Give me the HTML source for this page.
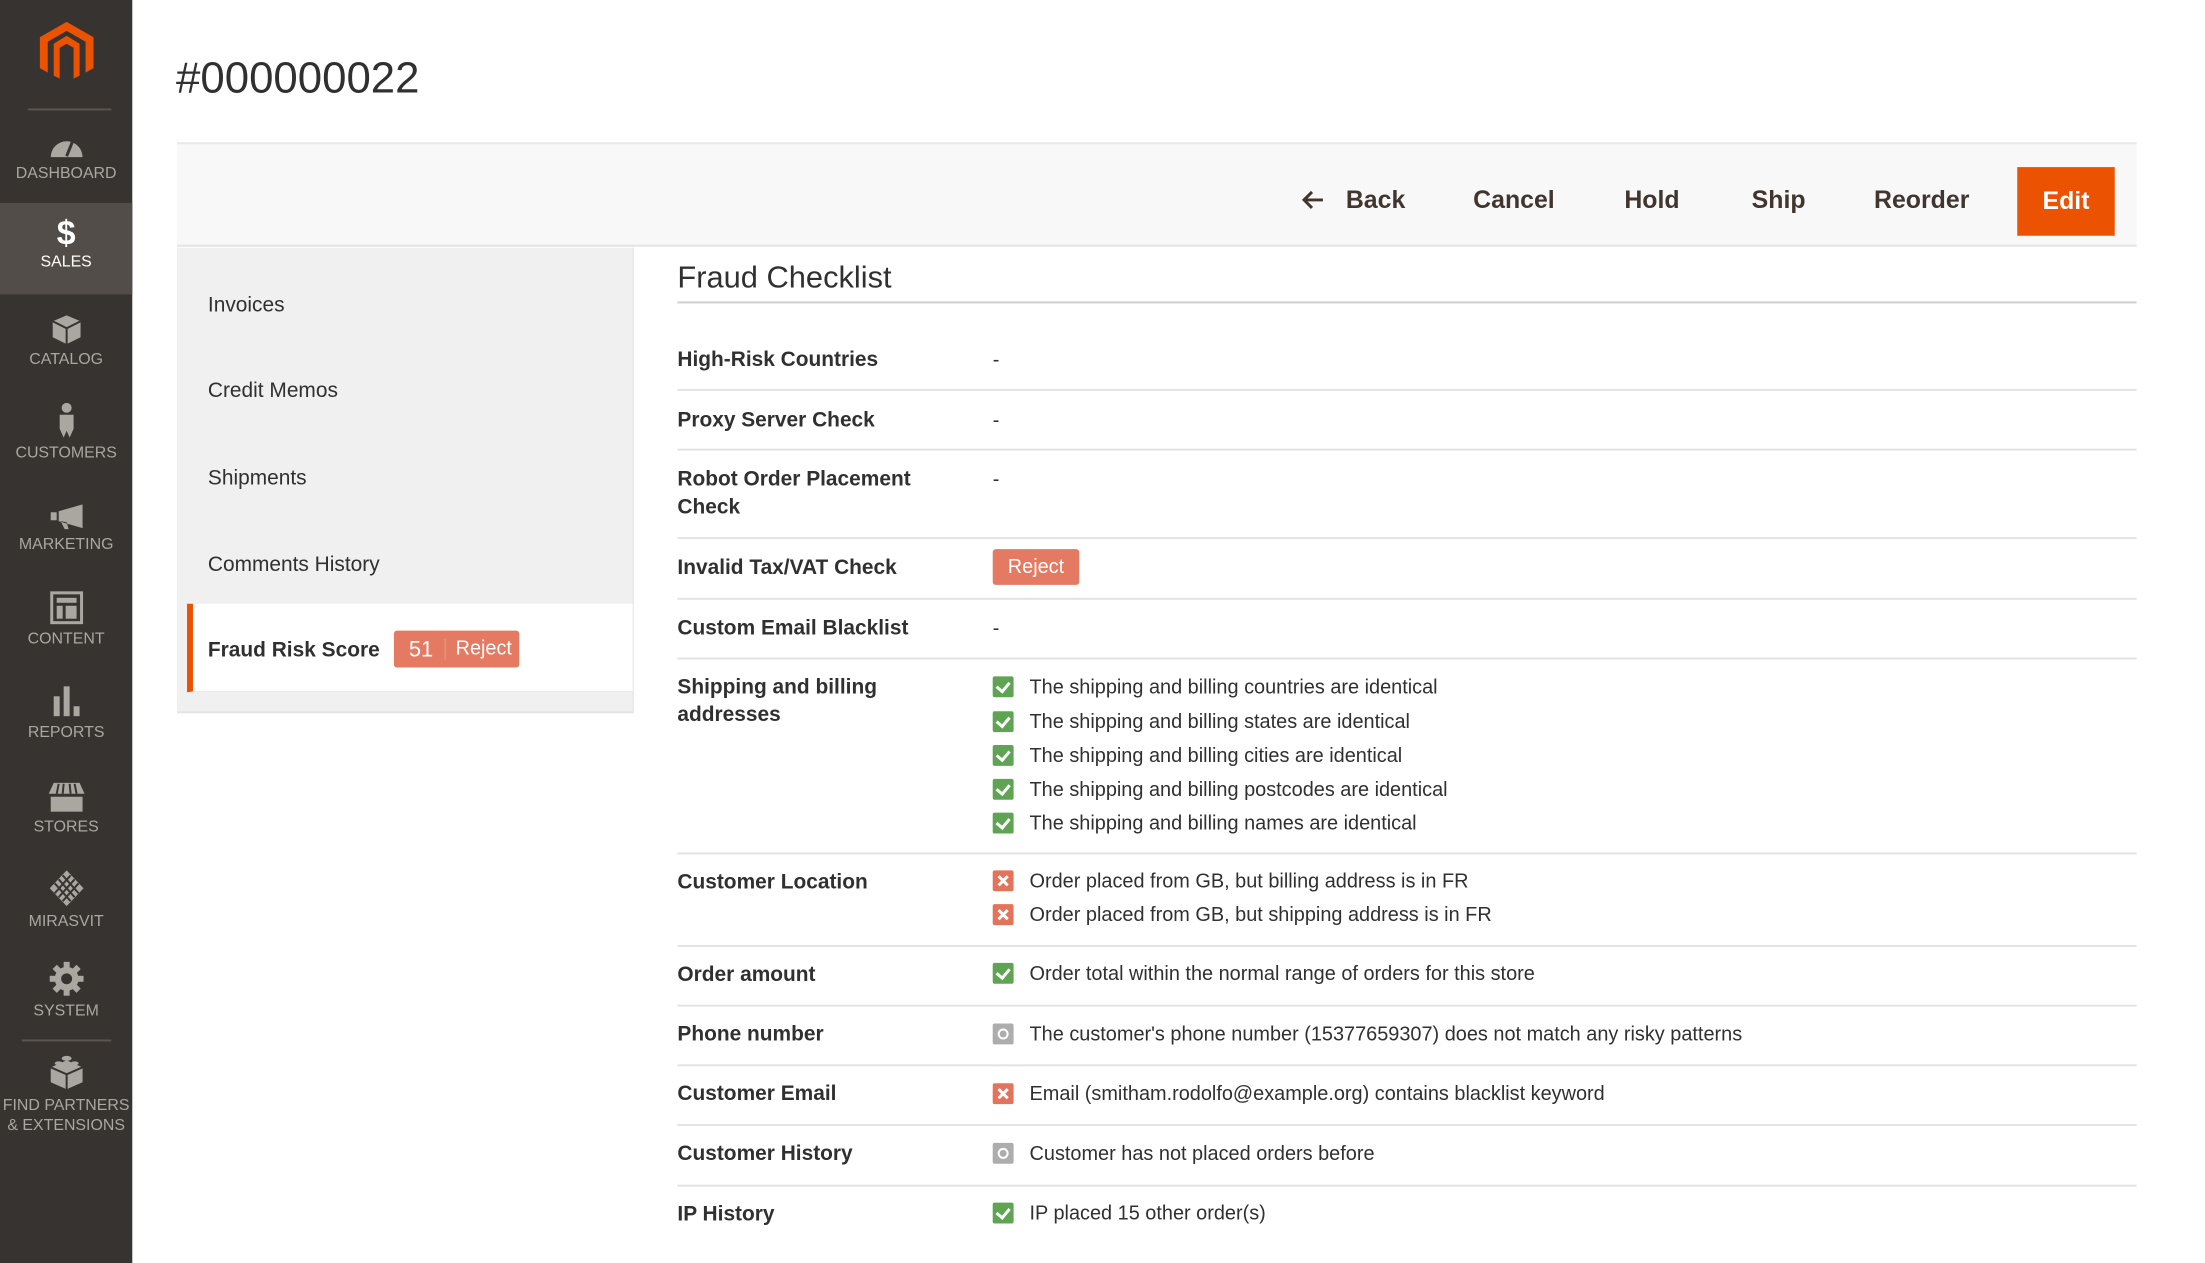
<!DOCTYPE html>
<html><head><meta charset="utf-8"><style>
*{margin:0;padding:0;box-sizing:border-box}
body{width:2205px;height:1251px;overflow:hidden;background:#fff;font-family:"Liberation Sans",sans-serif;color:#303030;position:relative}
#wrap{position:absolute;left:0;top:0;width:2220px;height:1260px;transform:scale(0.9947);transform-origin:0 0}
.abs{position:absolute;white-space:nowrap}
#side{position:absolute;left:0;top:0;width:133px;height:1270px;background:#373330}
.ni{position:absolute;left:0;width:133px;text-align:center;color:#aaa6a0;font-size:16px;line-height:18px}
.ni svg{display:block;margin:0 auto 6px}
.lbl{position:absolute;left:681px;font-size:21px;font-weight:bold;color:#303030;line-height:28px}
.val{position:absolute;left:998px;font-size:20px;color:#303030;line-height:28px;white-space:nowrap}
.sep{position:absolute;left:681px;width:1467px;height:2px;background:#e3e3e3}
.ic{display:inline-block;width:21px;height:21px;border-radius:2px;vertical-align:-4px;margin-right:16px;position:relative}
.g{background:#5fa453}.r{background:#e4735c}.o{background:#adadad}
.g::after{content:"";position:absolute;left:6px;top:3px;width:6px;height:10px;border:solid #fff;border-width:0 3px 3px 0;transform:rotate(40deg)}
.r::before,.r::after{content:"";position:absolute;left:9px;top:4px;width:3px;height:13px;background:#fff;transform:rotate(45deg)}
.r::after{transform:rotate(-45deg)}
.o::after{content:"";position:absolute;left:5px;top:5px;width:7px;height:7px;border:2px solid #fff;border-radius:50%}
.tab{position:absolute;left:209px;font-size:21px;color:#303030;line-height:28px}
.btn{position:absolute;top:186px;font-size:25px;font-weight:bold;color:#41362f;line-height:30px}
</style></head><body><div id="wrap">
<div id="side">
  <svg class="abs" style="left:40px;top:22px" width="54" height="62" viewBox="0 0 54 62"><path d="M27 0 L54 15.5 V46.5 L46 51 V20 L27 9 L8 20 V51 L0 46.5 V15.5 Z" fill="#eb5202"/><path d="M14 22 V54 L20 57 V26 L27 22 L34 26 V57 L40 54 V22 L27 14Z" fill="#eb5202"/><path d="M24 27 V55 L27 57 L30 55 V27 L27 25Z" fill="#373330"/></svg>
  <div class="abs" style="left:28px;top:109px;width:84px;height:2px;background:#5a5551"></div>
  <div class="ni" style="top:134px"><svg width="36" height="26" viewBox="0 0 36 26"><path d="M2 24 A16 16 0 0 1 34 24 Z" fill="#aaa6a0"/><path d="M18 23 L24 8" stroke="#373330" stroke-width="3"/></svg>DASHBOARD</div>
  <div style="position:absolute;left:0;top:204px;width:133px;height:92px;background:#524d49"></div>
  <div class="ni" style="top:218px;color:#fff"><div style="font-size:34px;font-weight:bold;line-height:34px;margin-bottom:3px">$</div>SALES</div>
  <div class="ni" style="top:315px"><svg width="32" height="32" viewBox="0 0 32 32"><path d="M16 2 L30 8 V24 L16 31 L2 24 V8 Z" fill="#aaa6a0"/><path d="M2 8 L16 15 L30 8 M16 15 V31" stroke="#373330" stroke-width="2" fill="none"/></svg>CATALOG</div>
  <div class="ni" style="top:405px"><svg width="22" height="36" viewBox="0 0 22 36"><circle cx="11" cy="5" r="5" fill="#aaa6a0"/><path d="M4 12 H18 V26 L14 35 L11 28 L8 35 L4 26Z" fill="#aaa6a0"/></svg>CUSTOMERS</div>
  <div class="ni" style="top:505px"><svg width="36" height="28" viewBox="0 0 36 28"><path d="M2 10 H8 V18 H2Z M10 9 L34 2 V26 L10 19Z M12 19 L16 27 H20 L18 20Z" fill="#aaa6a0"/></svg>MARKETING</div>
  <div class="ni" style="top:594px"><svg width="34" height="34" viewBox="0 0 34 34"><rect x="2" y="2" width="30" height="30" fill="none" stroke="#aaa6a0" stroke-width="3"/><rect x="7" y="7" width="20" height="5" fill="#aaa6a0"/><rect x="7" y="15" width="6" height="13" fill="#aaa6a0"/><rect x="16" y="15" width="11" height="13" fill="#aaa6a0"/></svg>CONTENT</div>
  <div class="ni" style="top:688px"><svg width="30" height="34" viewBox="0 0 30 34"><rect x="2" y="12" width="6" height="20" fill="#aaa6a0"/><rect x="12" y="2" width="6" height="30" fill="#aaa6a0"/><rect x="22" y="22" width="6" height="10" fill="#aaa6a0"/></svg>REPORTS</div>
  <div class="ni" style="top:785px"><svg width="38" height="32" viewBox="0 0 38 32"><path d="M6 2 H32 L37 13 H1Z" fill="#aaa6a0"/><path d="M11 3 L9 13 M16 3 L15 13 M22 3 L23 13 M27 3 L29 13" stroke="#373330" stroke-width="2"/><rect x="3" y="16" width="32" height="15" fill="#aaa6a0"/></svg>STORES</div>
  <div class="ni" style="top:874px"><svg width="36" height="38" viewBox="0 0 36 38"><path d="M18 1 L35 19 L18 37 L1 19Z" fill="#aaa6a0"/><path d="M10 10 L26 28 M14 6 L30 24 M6 14 L22 32 M26 10 L10 28 M22 6 L6 24 M30 14 L14 32" stroke="#373330" stroke-width="2"/></svg>MIRASVIT</div>
  <div class="ni" style="top:966px"><svg width="36" height="36" viewBox="0 0 36 36"><g fill="#aaa6a0"><circle cx="18" cy="18" r="12"/><rect x="15" y="1" width="6" height="34"/><rect x="1" y="15" width="34" height="6"/><rect x="15" y="1" width="6" height="34" transform="rotate(45 18 18)"/><rect x="15" y="1" width="6" height="34" transform="rotate(-45 18 18)"/></g><circle cx="18" cy="18" r="5.5" fill="#373330"/></svg>SYSTEM</div>
  <div class="abs" style="left:22px;top:1045px;width:90px;height:2px;background:#5a5551"></div>
  <div class="ni" style="top:1060px;line-height:20px"><svg width="36" height="36" viewBox="0 0 36 36"><path d="M18 6 L34 13 V28 L18 35 L2 28 V13Z" fill="#aaa6a0"/><path d="M2 13 L18 20 L34 13 M18 20 V35" stroke="#373330" stroke-width="2" fill="none"/><ellipse cx="18" cy="4" rx="5" ry="2.5" fill="#aaa6a0"/><ellipse cx="10" cy="9" rx="4" ry="2" fill="#aaa6a0"/><ellipse cx="26" cy="9" rx="4" ry="2" fill="#aaa6a0"/></svg>FIND PARTNERS<br>&amp; EXTENSIONS</div>
</div>

<div class="abs" style="left:177px;top:51px;font-size:44px;color:#303030;line-height:56px">#000000022</div>

<div class="abs" style="left:178px;top:143px;width:1970px;height:105px;background:#f8f8f8;border-top:2px solid #e8e8e8;border-bottom:2px solid #e3e3e3"></div>
<svg class="abs" style="left:1308px;top:191px" width="24" height="20" viewBox="0 0 24 20"><path d="M22 10 H3 M11 2 L3 10 L11 18" stroke="#41362f" stroke-width="3" fill="none"/></svg>
<div class="btn" style="left:1353px">Back</div>
<div class="btn" style="left:1481px">Cancel</div>
<div class="btn" style="left:1633px">Hold</div>
<div class="btn" style="left:1761px">Ship</div>
<div class="btn" style="left:1884px">Reorder</div>
<div class="abs" style="left:2028px;top:168px;width:98px;height:69px;background:#eb5202;color:#fff;font-size:25px;font-weight:bold;line-height:69px;text-align:center">Edit</div>

<div class="abs" style="left:178px;top:249px;width:459px;height:468px;background:#f0f0f0;border-bottom:2px solid #e3e3e3;border-right:1px solid #e3e3e3"></div>
<div class="tab" style="top:293px">Invoices</div>
<div class="tab" style="top:379px">Credit Memos</div>
<div class="tab" style="top:467px">Shipments</div>
<div class="tab" style="top:554px">Comments History</div>
<div class="abs" style="left:188px;top:607px;width:448px;height:89px;background:#fff;border-left:6px solid #eb5202;border-bottom:1px solid #e3e3e3"></div>
<div class="tab" style="top:640px;font-weight:bold">Fraud Risk Score</div>
<div class="abs" style="left:396px;top:634px;width:126px;height:37px;background:#e47a62;border-radius:3px;color:#fff;line-height:37px;font-size:20px"><span style="position:absolute;left:15px;font-size:22px">51</span><span style="position:absolute;left:51px;top:8px;width:1px;height:21px;background:#eb9e8c"></span><span style="position:absolute;left:62px">Reject</span></div>

<div class="abs" style="left:681px;top:260px;font-size:31px;color:#303030;line-height:38px">Fraud Checklist</div>
<div class="abs" style="left:681px;top:303px;width:1467px;height:2px;background:#cfcfcf"></div>

<div class="lbl" style="top:348px">High-Risk Countries</div><div class="val" style="top:348px">-</div>
<div class="sep" style="top:391px"></div>
<div class="lbl" style="top:409px">Proxy Server Check</div><div class="val" style="top:409px">-</div>
<div class="sep" style="top:451px"></div>
<div class="lbl" style="top:468px">Robot Order Placement<br>Check</div><div class="val" style="top:468px">-</div>
<div class="sep" style="top:540px"></div>
<div class="lbl" style="top:557px">Invalid Tax/VAT Check</div>
<div class="abs" style="left:998px;top:552px;width:87px;height:36px;background:#e47a62;border-radius:3px;color:#fff;font-size:20px;line-height:36px;text-align:center">Reject</div>
<div class="sep" style="top:601px"></div>
<div class="lbl" style="top:618px">Custom Email Blacklist</div><div class="val" style="top:618px">-</div>
<div class="sep" style="top:661px"></div>
<div class="lbl" style="top:677px">Shipping and billing<br>addresses</div>
<div class="val" style="top:677px"><span class="ic g"></span>The shipping and billing countries are identical</div>
<div class="val" style="top:712px"><span class="ic g"></span>The shipping and billing states are identical</div>
<div class="val" style="top:746px"><span class="ic g"></span>The shipping and billing cities are identical</div>
<div class="val" style="top:780px"><span class="ic g"></span>The shipping and billing postcodes are identical</div>
<div class="val" style="top:814px"><span class="ic g"></span>The shipping and billing names are identical</div>
<div class="sep" style="top:857px"></div>
<div class="lbl" style="top:873px">Customer Location</div>
<div class="val" style="top:872px"><span class="ic r"></span>Order placed from GB, but billing address is in FR</div>
<div class="val" style="top:906px"><span class="ic r"></span>Order placed from GB, but shipping address is in FR</div>
<div class="sep" style="top:950px"></div>
<div class="lbl" style="top:966px">Order amount</div>
<div class="val" style="top:965px"><span class="ic g"></span>Order total within the normal range of orders for this store</div>
<div class="sep" style="top:1010px"></div>
<div class="lbl" style="top:1026px">Phone number</div>
<div class="val" style="top:1026px"><span class="ic o"></span>The customer's phone number (15377659307) does not match any risky patterns</div>
<div class="sep" style="top:1070px"></div>
<div class="lbl" style="top:1086px">Customer Email</div>
<div class="val" style="top:1086px"><span class="ic r"></span>Email (smitham.rodolfo@example.org) contains blacklist keyword</div>
<div class="sep" style="top:1130px"></div>
<div class="lbl" style="top:1146px">Customer History</div>
<div class="val" style="top:1146px"><span class="ic o"></span>Customer has not placed orders before</div>
<div class="sep" style="top:1191px"></div>
<div class="lbl" style="top:1207px">IP History</div>
<div class="val" style="top:1206px"><span class="ic g"></span>IP placed 15 other order(s)</div>
</div></body></html>
